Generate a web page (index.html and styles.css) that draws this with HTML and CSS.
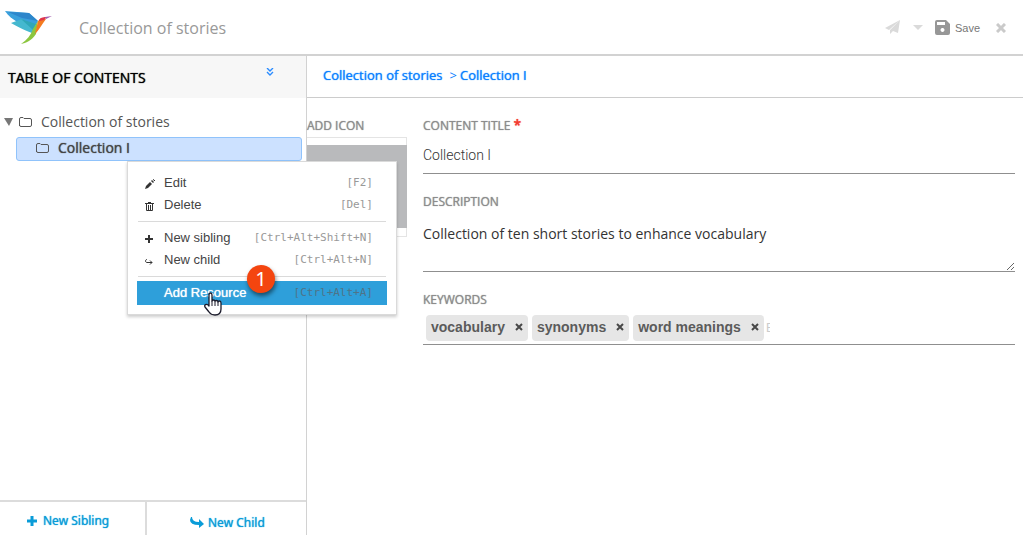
FILE: index.html
```
<!DOCTYPE html>
<html lang="en">
<head>
<meta charset="utf-8">
<title>Collection of stories</title>
<link rel="stylesheet" href="styles.css">
</head>
<body>
<header class="topbar">
  <svg class="logo" viewBox="0 0 48 36" aria-hidden="true">
    <path fill="#3aa0dc" d="M0 1L24 3 33 11 29 19C18 16 6 10 0 1Z"/>
    <path fill="#2d86cb" d="M3 2L24 3 33 11 17 8Z"/>
    <path fill="#45b8cf" d="M6 13L17 9 29 18 27 23C18 20 12 16 6 13Z"/>
    <path fill="#2fa7b8" d="M16 9L31 14 28 20Z"/>
    <path fill="#8cc63f" d="M33 11L31 24C26 31 21 33 16 34 22 30 26 25 28 19Z"/>
    <path fill="#f47b20" d="M33 11L36 8 41 9C37 14 34 20 30 24Z"/>
    <path fill="#e0344a" d="M34 10C36 7 39 7 42 7L39 10 34 11Z"/>
    <path fill="#a45fae" d="M40 7L47 6 41 9Z"/>
  </svg>
  <h1 class="doc-title">Collection of stories</h1>
  <div class="actions">
    <button class="icon-btn send" aria-label="Send"><svg width="15" height="15" viewBox="0 0 15 15"><path fill="#dadada" d="M15 0L0 8l4 2zM15 0L5 10v4l3-3 5 2z"/></svg></button>
    <button class="icon-btn caret" aria-label="More"><svg width="10" height="6" viewBox="0 0 10 6"><path fill="#dadada" d="M0 0h10L5 5z"/></svg></button>
    <button class="icon-btn save"><svg width="15" height="15" viewBox="0 0 15 15"><path fill="#979797" fill-rule="evenodd" d="M2 0h9l4 4v9q0 2-2 2H2q-2 0-2-2V2q0-2 2-2zM2 2v3h8V2zM7 8a2 2 0 1 0 1 0z"/></svg>Save</button>
    <button class="icon-btn close" aria-label="Close"><svg width="10" height="10" viewBox="0 0 10 10"><path stroke="#cacaca" stroke-width="3" d="M1 1l8 8M9 1l-8 8"/></svg></button>
  </div>
</header>

<div class="workspace">
  <aside class="sidebar">
    <div class="toc-head">
      <h2 class="toc-title">TABLE OF CONTENTS</h2>
      <button class="icon-btn collapse" aria-label="Collapse all"><svg width="8" height="8" viewBox="0 0 8 8"><path fill="none" stroke="#2a8cff" stroke-width="1.400" d="M1 0l3 3 3-3M1 4l3 3 3-3"/></svg></button>
    </div>
    <ul class="tree">
      <li class="node">
        <svg width="10" height="9" viewBox="0 0 10 9"><path fill="#777" d="M0 0h9L5 8z"/></svg>
        <svg class="folder" width="13" height="11" viewBox="0 0 13 11"><path fill="none" stroke="#555" d="M.5 9V2Q.5.5 2 .5h2l1 1h6q1.500 0 1.500 1.500v5q0 1.500-1.500 1.500H2Q.5 9.500.5 8z"/></svg>
        <span>Collection of stories</span>
      </li>
      <li class="node child">
        <svg class="folder" width="13" height="11" viewBox="0 0 13 11"><path fill="none" stroke="#555" d="M.5 9V2Q.5.5 2 .5h2l1 1h6q1.500 0 1.500 1.500v5q0 1.500-1.500 1.500H2Q.5 9.500.5 8z"/></svg>
        <span>Collection I</span>
      </li>
    </ul>
    <div class="toc-foot">
      <button class="foot-btn"><svg width="10" height="10" viewBox="0 0 10 10"><path stroke="#0a9cd8" stroke-width="3" d="M5 0v10M0 5h10"/></svg>New Sibling</button>
      <button class="foot-btn next"><svg width="14" height="11" viewBox="0 0 14 11"><path fill="#0a9cd8" d="M1 0h1q0 5 7 5V2l5 5-5 4V8Q0 8 0 3z"/></svg>New Child</button>
    </div>
  </aside>

  <main class="main">
    <nav class="crumbs"><a href="#">Collection of stories</a><span class="sep">&gt;</span><a href="#">Collection I</a></nav>
    <div class="content">
      <section class="icon-col">
        <h3 class="label">ADD ICON</h3>
        <div class="icon-frame"><div class="icon-fill"></div></div>
      </section>
      <form class="form">
        <label class="label" for="title">CONTENT TITLE<span class="star">*</span></label>
        <input class="field title-field" id="title" type="text" value="Collection I">
        <label class="label" for="desc">DESCRIPTION</label>
        <textarea class="field desc-field" id="desc">Collection of ten short stories to enhance vocabulary</textarea>
        <label class="label" for="keys">KEYWORDS</label>
        <div class="tags">
          <span class="tag">vocabulary<button type="button" class="tag-x" aria-label="Remove vocabulary"><svg width="8" height="8" viewBox="0 0 8 8"><path stroke="#484848" stroke-width="2" d="M1 1l6 6M7 1L1 7"/></svg></button></span>
          <span class="tag">synonyms<button type="button" class="tag-x" aria-label="Remove synonyms"><svg width="8" height="8" viewBox="0 0 8 8"><path stroke="#484848" stroke-width="2" d="M1 1l6 6M7 1L1 7"/></svg></button></span>
          <span class="tag">word meanings<button type="button" class="tag-x" aria-label="Remove word meanings"><svg width="8" height="8" viewBox="0 0 8 8"><path stroke="#484848" stroke-width="2" d="M1 1l6 6M7 1L1 7"/></svg></button></span>
          <input class="tag-input" id="keys" type="text" placeholder="E">
        </div>
      </form>
    </div>
  </main>
</div>

<div class="menu" role="menu">
  <button class="item" role="menuitem"><svg width="11" height="11" viewBox="0 0 11 11"><path fill="#333" d="M1 10l1-3 4-4 2 2-4 4zM7 2l1-1 2 2-1 1zM9 0h1v1h1v1h-1z"/></svg><span>Edit</span><kbd>[F2]</kbd></button>
  <button class="item" role="menuitem"><svg width="11" height="11" viewBox="0 0 11 11"><path fill="none" stroke="#333" d="M1 2.500h9M4 1.500h3M2.500 3v6.500h6V3M4.500 4v5M6.500 4v5"/></svg><span>Delete</span><kbd>[Del]</kbd></button>
  <hr class="rule">
  <button class="item" role="menuitem"><svg width="11" height="11" viewBox="0 0 11 11"><path stroke="#333" stroke-width="2" d="M5 1v8M1 5h8"/></svg><span>New sibling</span><kbd>[Ctrl+Alt+Shift+N]</kbd></button>
  <button class="item" role="menuitem"><svg width="11" height="11" viewBox="0 0 11 11"><path fill="none" stroke="#333" d="M3 3.500C1 3.500 1 6.500 3 6.500h5M6 4.500l2 2-2 2"/></svg><span>New child</span><kbd>[Ctrl+Alt+N]</kbd></button>
  <hr class="rule">
  <button class="item active" role="menuitem"><i class="blank"></i><span>Add Resource</span><kbd>[Ctrl+Alt+A]</kbd></button>
  <span class="badge">1</span>
  <svg class="cursor" width="18" height="24" viewBox="0 0 18 24" aria-hidden="true"><path fill="#fff" stroke="#1b1b2b" stroke-linejoin="round" stroke-width="1.300" d="M5 14V3Q5 1 6.500 1T8 3v6q0-1 1.500-1T11 9.500q0-1 1.500-1t1.500 1.500q0-1 1.500-1T17 11v6q0 6-6 6-4 0-6-3l-4-5q-1-2 1-2.500Q3.500 12 5 14z"/><path fill="none" stroke="#1b1b2b" d="M8 9v5M11 10v4M14 10v4"/></svg>
</div>
</body>
</html>
```
FILE: styles.css
```
* { box-sizing: border-box; }
body {
  margin: 0;
  min-height: 100vh;
  display: flex;
  flex-direction: column;
  position: relative;
  overflow: hidden;
  background: #fff;
  color: #555;
  font: 14px/20px "Open Sans", sans-serif;
}
h1, h2, h3, ul { margin: 0; padding: 0; font: inherit; }
button { border: 0; padding: 0; background: none; font: inherit; color: inherit; display: flex; align-items: center; cursor: pointer; }
svg { flex: none; display: block; }

.topbar { display: flex; align-items: center; height: 56px; padding: 1px 17px 0 5px; border-bottom: 2px solid #d2d2d2; }
.logo { width: 48px; height: 36px; }
.doc-title { margin-left: 26px; font-size: 16px; color: #999; }
.actions { display: flex; align-items: center; margin-left: auto; }
.caret { margin-left: 13px; }
.save { margin-left: 12px; gap: 5px; font: 11px/16px "Liberation Sans", sans-serif; color: #777; }
.close { margin-left: 16px; }

.workspace { flex: 1; display: flex; }
.sidebar { flex: none; width: 307px; display: flex; flex-direction: column; border-right: 1px solid #d2d2d2; }
.toc-head { display: flex; align-items: center; justify-content: space-between; height: 42px; padding: 2px 32px 0 8px; background: #f7f7f7; }
.toc-title { color: #000; }
.toc-title, .crumbs a, .label, .child span, .foot-btn, .active span { -webkit-text-stroke: thin; text-shadow: 0 0 1px currentColor; -webkit-text-stroke-width: 0; }
.collapse { margin-bottom: 12px; }
.tree { list-style: none; padding: 12px 4px 0; }
.node { display: flex; align-items: center; height: 24px; gap: 5px; }
.folder { margin-right: 4px; }
.child { margin: 3px 0 0 12px; padding: 0 19px 2px; border: 1px solid #90c3fb; border-radius: 3px; background: #cce1ff; color: #444; }
.toc-foot { display: flex; height: 35px; margin-top: auto; border-top: 2px solid #dcdcdc; }
.foot-btn { width: 147px; padding: 4px 0 0 27px; gap: 6px; border-right: 2px solid #dcdcdc; font: 12px/16px "Noto Sans", sans-serif; color: #0a9cd8; }
.next { flex: 1; padding: 8px 0 0 43px; gap: 4px; border: 0; }

.main { flex: 1; min-width: 0; }
.crumbs { display: flex; height: 42px; padding: 9px 16px 0; border-bottom: 1px solid #ccc; font-size: 13px; color: #0a80ff; }
.crumbs a { color: #0a80ff; text-decoration: none; }
.sep { margin: 0 3px 0 7px; }
.content { display: flex; gap: 16px; padding: 20px 8px 0 0; }
.icon-col { flex: none; width: 100px; }
.label { display: block; font-size: 12px; line-height: 16px; color: #8c8c8c; }
.icon-frame { height: 100px; margin-top: 3px; padding: 7px 0 8px; border: 1px solid #e4e4e4; border-left: 0; }
.icon-fill { height: 100%; margin-right: -1px; background: #b9babc; }
.form { flex: 1; min-width: 0; }
.star { margin-left: 3px; line-height: 0; color: #f33a30; font-size: 14px; font-weight: 600; }
.field { display: block; width: 100%; padding: 0; border: 0; border-bottom: 1px solid #8f8f8f; border-radius: 0; outline: 0; background: none; }
.title-field { height: 36px; margin: 4px 0 20px; padding-bottom: 2px; font: 300 14px/20px Roboto, sans-serif; color: #333; }
.desc-field { height: 58px; margin: 4px 0 20px; padding-top: 10px; font: 14px/20px "Open Sans", sans-serif; color: #333; resize: vertical; }
.tags { display: flex; align-items: center; gap: 4px; padding: 7px 3px 3px; border-bottom: 1px solid #8f8f8f; }
.tag { display: flex; align-items: center; gap: 10px; height: 26px; padding: 0 5px 2px; border-radius: 4px; background: #e6e6e6; font: bold 14px/20px "Liberation Sans", sans-serif; color: #5b5b5b; }
.tag-input { width: 4px; padding: 0; margin-left: -2px; border: 0; outline: 0; font: 12px/16px "Liberation Sans", sans-serif; }
.tag-input::placeholder { color: #ccc; }

.menu { position: absolute; left: 127px; top: 161px; width: 270px; padding: 10px 9px 9px; border: 1px solid #dadada; background: #fff; box-shadow: 0 2px 3px rgba(0, 0, 0, .2); }
.item { width: 100%; height: 22px; padding: 0 14px 0 7px; font: 13px/16px "Liberation Sans", sans-serif; color: #444; }
.item svg, .blank { width: 11px; margin: 2px 9px 0 0; }
.item kbd { margin-left: auto; font: 11px/16px "DejaVu Sans Mono", monospace; color: #999; }
.rule { height: 1px; margin: 5px 1px; border: 0; background: #dadada; }
.active { height: 24px; margin-top: -1px; background: #2e9fda; color: #fff; }
.active kbd { color: #4f7388; }
.badge { position: absolute; left: 119px; top: 103px; width: 28px; height: 28px; border-radius: 50%; background: #f4450f; box-shadow: 1px 3px 4px rgba(0, 0, 0, .5); color: #fff; font: 20px/28px "Noto Sans", sans-serif; text-align: center; }
.cursor { position: absolute; left: 76px; top: 130px; }
```
